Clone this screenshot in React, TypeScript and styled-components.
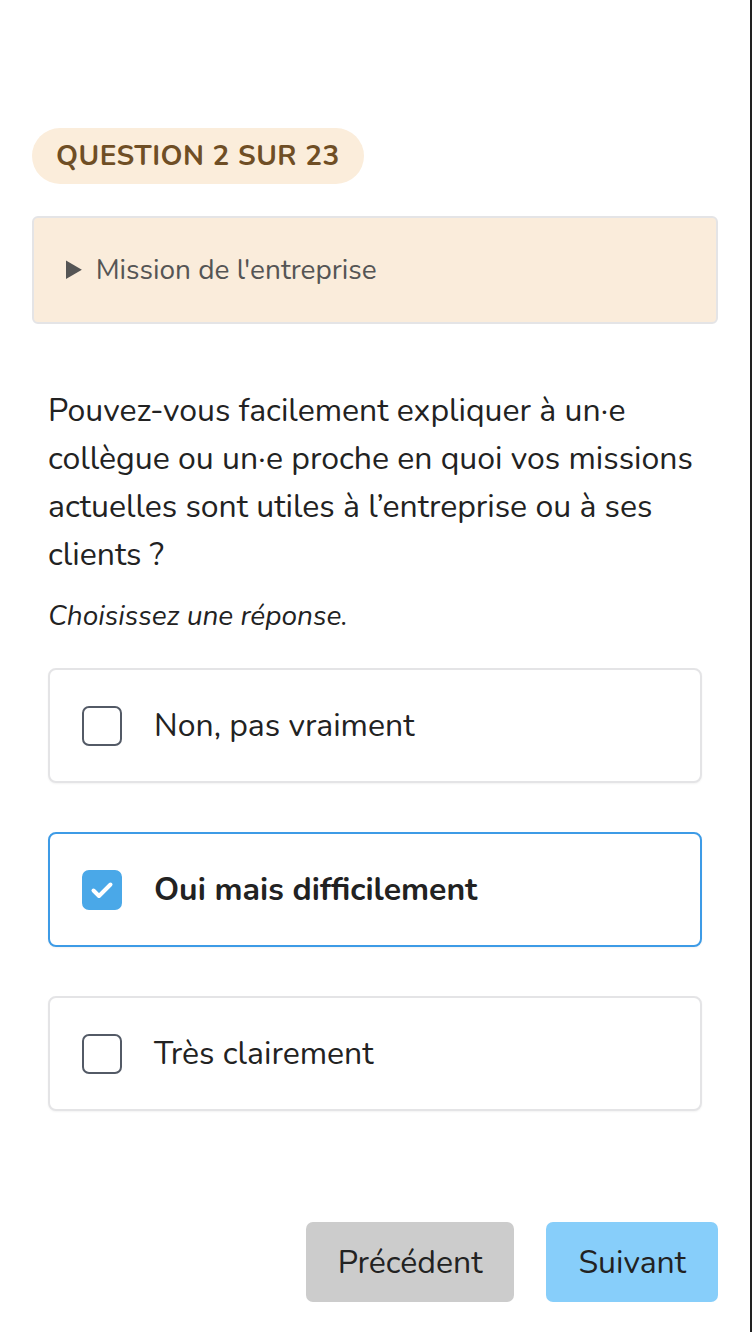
import React, { useState } from "react";
import styled, { createGlobalStyle } from "styled-components";

const GlobalStyle = createGlobalStyle`
  html, body {
    margin: 0;
    padding: 0;
    background: #ffffff;
  }
  body {
    font-family: "Nunito", "Open Sans", "Noto Sans", sans-serif;
    color: #222222;
  }
`;

const Page = styled.div`
  box-sizing: border-box;
  width: 752px;
  min-height: 1332px;
  border-right: 2px solid #222222;
  padding: 128px 32px 30px 32px;
`;

const Badge = styled.div`
  display: inline-flex;
  align-items: center;
  height: 56px;
  padding: 0 24px;
  border-radius: 28px;
  background: #fbeddb;
  color: #6f4e25;
  font-size: 28px;
  font-weight: 700;
  letter-spacing: 0.5px;
`;

const Details = styled.details`
  box-sizing: border-box;
  height: 108px;
  margin-top: 32px;
  background: #faecdb;
  border: 2px solid #e4e4e6;
  border-radius: 6px;
  padding: 0 32px;
  display: flex;
  align-items: center;
`;

const Summary = styled.summary`
  font-size: 28px;
  color: #555555;
  cursor: pointer;
  line-height: 104px;
`;

const Body = styled.div`
  padding: 0 16px;
`;

const Question = styled.p`
  margin: 63px 0 0 0;
  font-size: 32px;
  line-height: 48px;
  color: #222222;
`;

const Hint = styled.p`
  margin: 18px 0 0 0;
  font-size: 28px;
  line-height: 38px;
  font-style: italic;
  color: #222222;
`;

const Options = styled.div`
  display: flex;
  flex-direction: column;
  gap: 49px;
  margin-top: 33px;
`;

const Option = styled.label<{ $selected: boolean }>`
  box-sizing: border-box;
  display: flex;
  align-items: center;
  gap: 32px;
  height: 115px;
  padding: 0 32px;
  border: 2px solid ${(p) => (p.$selected ? "#3d9be6" : "#e4e4e6")};
  border-radius: 8px;
  background: #ffffff;
  box-shadow: 0 1px 2px rgba(0, 0, 0, 0.05);
  cursor: pointer;
`;

const Box = styled.span<{ $checked: boolean }>`
  box-sizing: border-box;
  flex: none;
  width: 40px;
  height: 40px;
  border-radius: 7px;
  border: 2px solid ${(p) => (p.$checked ? "#4aa8e8" : "#535a66")};
  background: ${(p) => (p.$checked ? "#4aa8e8" : "#ffffff")};
  display: flex;
  align-items: center;
  justify-content: center;
`;

const OptionText = styled.span<{ $selected: boolean }>`
  font-size: 32px;
  font-weight: ${(p) => (p.$selected ? 700 : 400)};
  color: #222222;
`;

const Footer = styled.div`
  display: flex;
  justify-content: flex-end;
  gap: 32px;
  margin-top: 111px;
`;

const Button = styled.button<{ $primary?: boolean }>`
  height: 80px;
  padding: 0 32px;
  border: none;
  border-radius: 7px;
  background: ${(p) => (p.$primary ? "#87cefa" : "#cccccc")};
  color: #222222;
  font-family: inherit;
  font-size: 32px;
  cursor: pointer;
`;

const Check = () => (
  <svg width="28" height="28" viewBox="0 0 28 28" fill="none">
    <path
      d="M5.5 14.5l5.5 5.5L22.5 8.5"
      stroke="#ffffff"
      strokeWidth="4"
      strokeLinecap="round"
      strokeLinejoin="round"
    />
  </svg>
);

const answers = ["Non, pas vraiment", "Oui mais difficilement", "Très clairement"];

export default function App() {
  const [selected, setSelected] = useState(1);

  return (
    <>
      <GlobalStyle />
      <Page>
        <Badge>QUESTION 2 SUR 23</Badge>
        <Details>
          <Summary>Mission de l'entreprise</Summary>
        </Details>
        <Body>
          <Question>
            Pouvez-vous facilement expliquer à un·e collègue ou un·e proche en quoi vos
            missions actuelles sont utiles à l’entreprise ou à ses clients ?
          </Question>
          <Hint>Choisissez une réponse.</Hint>
          <Options>
            {answers.map((a, i) => (
              <Option key={a} $selected={selected === i} onClick={() => setSelected(i)}>
                <Box $checked={selected === i}>{selected === i && <Check />}</Box>
                <OptionText $selected={selected === i}>{a}</OptionText>
              </Option>
            ))}
          </Options>
        </Body>
        <Footer>
          <Button>Précédent</Button>
          <Button $primary>Suivant</Button>
        </Footer>
      </Page>
    </>
  );
}
